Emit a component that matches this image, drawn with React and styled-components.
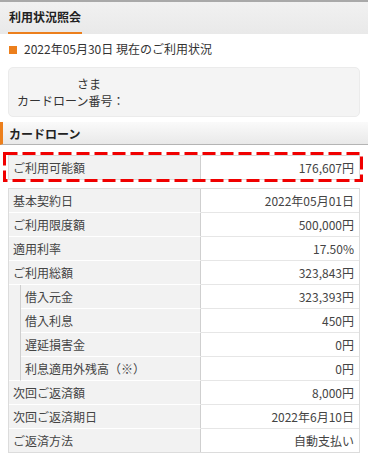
import React from 'react';
import styled, { createGlobalStyle } from 'styled-components';

const GlobalStyle = createGlobalStyle`
  body {
    margin: 0;
    background: #fff;
    font-family: "Noto Sans CJK JP", "Noto Sans", sans-serif;
    font-size: 12px;
    color: #333;
  }
`;

const Page = styled.div`
  width: 368px;
  padding-bottom: 6px;
`;

const TitleBar = styled.div`
  border-top: 2px solid #a9a9a9;
  height: 32px;
  background: linear-gradient(#f1f1f1, #e9e9e9);
  padding: 0 8px;
  display: flex;
`;

const Title = styled.h1`
  margin: 0;
  font-size: 12px;
  font-weight: bold;
  color: #222;
  display: flex;
  align-items: center;
  padding: 0 1px 2px;
  border-bottom: 2px solid #ec7f1c;
`;

const DateLine = styled.div`
  display: flex;
  align-items: center;
  gap: 7px;
  margin: 6px 9px 9px;
  line-height: 18px;
  color: #333;
`;

const Square = styled.span`
  width: 8px;
  height: 8px;
  background: #ec7f1c;
  margin-top: 2px;
`;

const InfoBox = styled.div`
  margin: 0 8px;
  background: #f4f4f4;
  border: 1px solid #ebebeb;
  border-radius: 5px;
  padding: 7px 8px 7px;
  line-height: 17px;
  color: #333;
`;

const Honorific = styled.div`
  padding-left: 60px;
`;

const SectionHead = styled.h2`
  margin: 5px 0 0;
  height: 23px;
  box-sizing: border-box;
  display: flex;
  align-items: center;
  padding-left: 9px;
  font-size: 12px;
  font-weight: bold;
  color: #222;
  background: linear-gradient(#fafafa, #e9e9e9);
  border-left: 3px solid #ec7f1c;
  border-bottom: 1px solid #b4b4b4;
  padding-left: 6px;
`;

const Highlight = styled.div`
  position: relative;
  margin: 10px 8px 0;
`;

const DashFrame = styled.svg`
  position: absolute;
  left: -5px;
  top: -3px;
  width: 360px;
  height: 30px;
  overflow: visible;
  pointer-events: none;
`;

const Table = styled.table`
  width: 352px;
  border-collapse: separate;
  border-spacing: 0;
  border: 1px solid #dcdcdc;
  margin: ${p => p.$gap ? '8px 8px 0' : '0'};
  font-size: 12px;
`;

const Label = styled.th`
  background: #f2f2f2;
  font-weight: normal;
  text-align: left;
  padding: 0 0 0 4px;
  height: 23px;
  color: #444;
  border-right: 1px solid #cfcfcf;
  border-bottom: 1px solid #fff;
  white-space: nowrap;
  tr:last-child > & {
    border-bottom: none;
  }
`;

const Indent = styled.th`
  background: #f2f2f2;
  width: 11px;
  padding: 0;
  border-right: 1px solid #cfcfcf;
  border-bottom: 1px solid #fff;
`;

const Value = styled.td`
  text-align: right;
  padding: 0 5px 0 0;
  width: 153px;
  color: #444;
  border-bottom: 1px solid #e6e6e6;
  white-space: nowrap;
  tr:last-child > & {
    border-bottom: none;
  }
`;

const topRows = [
  ['基本契約日', '2022年05月01日'],
  ['ご利用限度額', '500,000円'],
  ['適用利率', '17.50%'],
  ['ご利用総額', '323,843円'],
];

const subRows = [
  ['借入元金', '323,393円'],
  ['借入利息', '450円'],
  ['遅延損害金', '0円'],
  ['利息適用外残高（※）', '0円'],
];

const bottomRows = [
  ['次回ご返済額', '8,000円'],
  ['次回ご返済期日', '2022年6月10日'],
  ['ご返済方法', '自動支払い'],
];

export default function App() {
  return (
    <Page>
      <GlobalStyle />
      <TitleBar>
        <Title>利用状況照会</Title>
      </TitleBar>

      <DateLine>
        <Square />
        <span>2022年05月30日 現在のご利用状況</span>
      </DateLine>

      <InfoBox>
        <Honorific>さま</Honorific>
        <div>カードローン番号：</div>
      </InfoBox>

      <SectionHead>カードローン</SectionHead>

      <Highlight>
        <Table>
          <tbody>
            <tr>
              <Label colSpan={2}>ご利用可能額</Label>
              <Value>176,607円</Value>
            </tr>
          </tbody>
        </Table>
        <DashFrame viewBox="0 0 360 30">
          <rect x="1.5" y="1.5" width="357" height="27" fill="none" stroke="#f00000" strokeWidth="3" strokeDasharray="13 5" />
        </DashFrame>
      </Highlight>

      <Table $gap>
        <tbody>
          {topRows.map(([k, v]) => (
            <tr key={k}>
              <Label colSpan={2}>{k}</Label>
              <Value>{v}</Value>
            </tr>
          ))}
          {subRows.map(([k, v], i) => (
            <tr key={k}>
              {i === 0 && <Indent rowSpan={subRows.length} />}
              <Label>{k}</Label>
              <Value>{v}</Value>
            </tr>
          ))}
          {bottomRows.map(([k, v]) => (
            <tr key={k}>
              <Label colSpan={2}>{k}</Label>
              <Value>{v}</Value>
            </tr>
          ))}
        </tbody>
      </Table>
    </Page>
  );
}
